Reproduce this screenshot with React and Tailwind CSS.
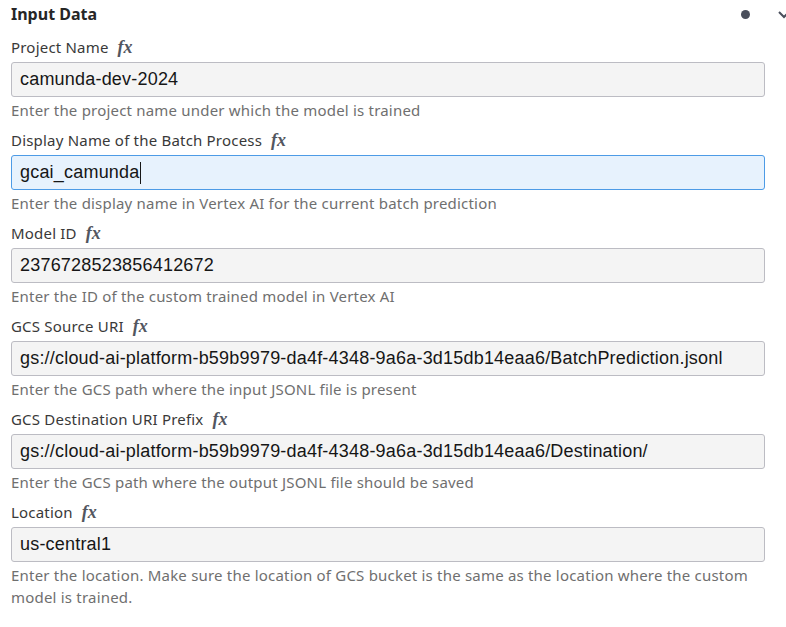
import React from 'react';

const fields = [
  {
    label: 'Project Name',
    value: 'camunda-dev-2024',
    help: 'Enter the project name under which the model is trained',
  },
  {
    label: 'Display Name of the Batch Process',
    value: 'gcai_camunda',
    help: 'Enter the display name in Vertex AI for the current batch prediction',
    focused: true,
  },
  {
    label: 'Model ID',
    value: '2376728523856412672',
    help: 'Enter the ID of the custom trained model in Vertex AI',
  },
  {
    label: 'GCS Source URI',
    value: 'gs://cloud-ai-platform-b59b9979-da4f-4348-9a6a-3d15db14eaa6/BatchPrediction.jsonl',
    help: 'Enter the GCS path where the input JSONL file is present',
  },
  {
    label: 'GCS Destination URI Prefix',
    value: 'gs://cloud-ai-platform-b59b9979-da4f-4348-9a6a-3d15db14eaa6/Destination/',
    help: 'Enter the GCS path where the output JSONL file should be saved',
  },
  {
    label: 'Location',
    value: 'us-central1',
    help: 'Enter the location. Make sure the location of GCS bucket is the same as the location where the custom model is trained.',
  },
];

const Fx = () => (
  <span className="ml-[9px] text-[18px] font-bold italic tracking-normal text-[#525660] font-['Liberation_Serif',serif] leading-none">
    fx
  </span>
);

const Field = ({ label, value, help, focused }) => (
  <div className="mb-[8px]">
    <div className="flex h-[22px] items-center text-[15px] tracking-[0.2px] text-[#393939]">
      <span>{label}</span>
      <Fx />
    </div>
    <div
      className={
        'mt-1 flex h-[35px] items-center rounded-[3px] border px-[8px] text-[18px] tracking-[0.2px] text-[#161616] font-["Liberation_Sans",Arial,sans-serif] ' +
        (focused ? 'border-[#4d9be6] bg-[#e7f2fd]' : 'border-[#bcbcc3] bg-[#f4f4f4]')
      }
    >
      <span>{value}</span>
      {focused && <span className="ml-[1px] h-[22px] w-px bg-[#161616]" />}
    </div>
    <div className="mt-[2px] text-[15px] leading-[22px] tracking-[0.2px] text-[#6f6f6f]">{help}</div>
  </div>
);

export default function App() {
  return (
    <div className="h-[627px] w-[786px] overflow-hidden bg-white font-['Noto_Sans',sans-serif]">
      <div className="flex h-[28px] items-center pl-[11px]">
        <span className="text-[16px] font-bold text-[#262626]">Input Data</span>
        <span className="ml-auto mr-[28px] h-[9px] w-[9px] rounded-full bg-[#4a4f5c]" />
        <svg width="12" height="8" viewBox="0 0 12 8" className="-mr-[4px] mt-[2px]">
          <path d="M1 1l5 5 5-5" fill="none" stroke="#4a4f5c" strokeWidth="2" />
        </svg>
      </div>
      <div className="mt-[8px] w-[765px] pl-[11px]">
        {fields.map((f) => (
          <Field key={f.label} {...f} />
        ))}
      </div>
    </div>
  );
}
